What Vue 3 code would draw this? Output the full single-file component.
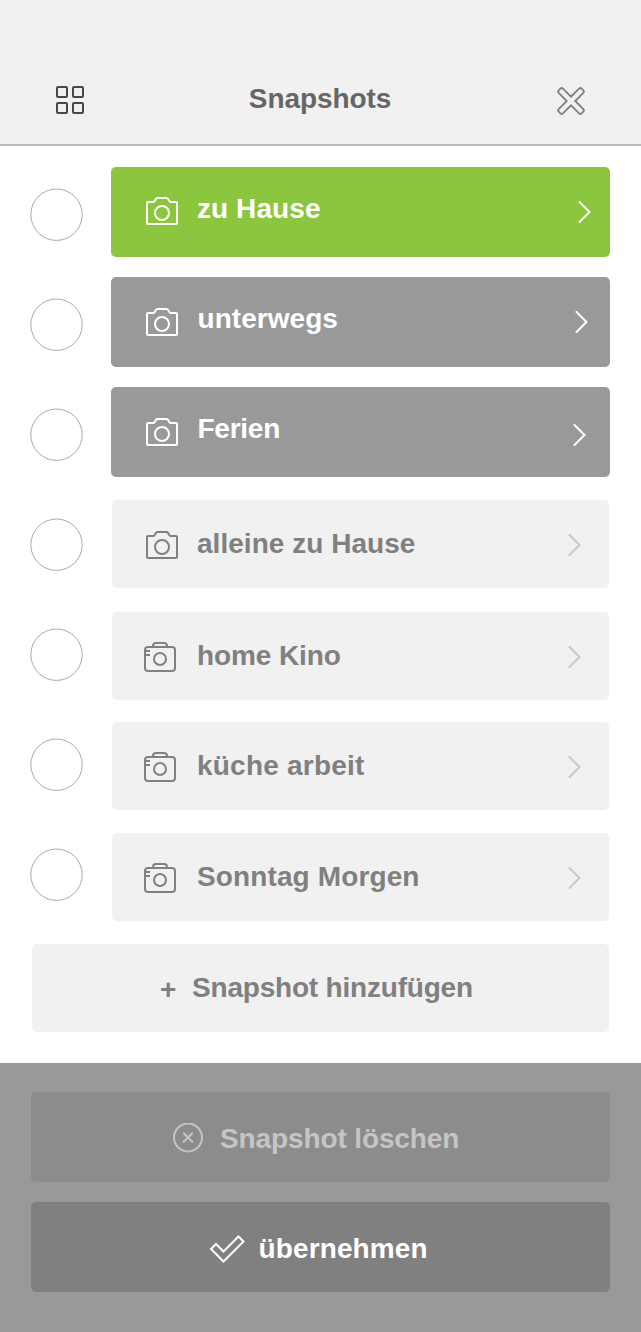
<script setup>
const snapshots = [
  { name: 'zu Hause', kind: 'active', icon: 'camera', tracking: 0.08 },
  { name: 'unterwegs', kind: 'saved', icon: 'camera', tracking: 0.05 },
  { name: 'Ferien', kind: 'saved', icon: 'camera', tracking: -0.25 },
  { name: 'alleine zu Hause', kind: 'idle', icon: 'camera', tracking: 0.03 },
  { name: 'home Kino', kind: 'idle', icon: 'compact', tracking: -0.1 },
  { name: 'küche arbeit', kind: 'idle', icon: 'compact', tracking: 0.22 },
  { name: 'Sonntag Morgen', kind: 'idle', icon: 'compact', tracking: 0.12 },
]
</script>

<template>
  <div class="screen">
    <header class="header">
      <svg class="grid-icon" width="28" height="28" viewBox="0 0 28 28">
        <rect x="1" y="1" width="10" height="10" rx="1" />
        <rect x="17" y="1" width="10" height="10" rx="1" />
        <rect x="1" y="17" width="10" height="10" rx="1" />
        <rect x="17" y="17" width="10" height="10" rx="1" />
      </svg>
      <h1 class="title">Snapshots</h1>
      <svg class="close-icon" width="30" height="30" viewBox="-15 -15 30 30">
        <path
          transform="rotate(45)"
          d="M-3-3V-14.400Q-3-16.200-1.200-16.200H1.200Q3-16.200 3-14.400V-3H14.400Q16.200-3 16.200-1.200V1.200Q16.200 3 14.400 3H3V14.400Q3 16.200 1.200 16.200H-1.200Q-3 16.200-3 14.400V3H-14.400Q-16.200 3-16.200 1.200V-1.200Q-16.200-3-14.400-3Z"
        />
      </svg>
    </header>

    <main class="main">
      <div class="list">
        <div class="radios">
          <svg v-for="s in snapshots" :key="s.name" class="radio" width="54" height="54" viewBox="0 0 54 54">
            <circle cx="26.5" cy="26.7" r="25.7" />
          </svg>
        </div>
        <div class="cards">
          <div v-for="s in snapshots" :key="s.name" class="card" :class="[s.kind, s.icon]">
            <svg v-if="s.icon === 'camera'" class="icon" width="32" height="28" viewBox="0 0 32 28">
              <path d="M2 5H7Q8 5 8.5 4.2L10 1.9Q10.500 1 11.500 1H20.500Q21.500 1 22 1.900L23.500 4.200Q24 5 25 5H30Q31 5 31 6V26Q31 27 30 27H2Q1 27 1 26V6Q1 5 2 5Z" />
              <circle cx="16" cy="16" r="7" />
            </svg>
            <svg v-else class="icon" width="32" height="30" viewBox="0 0 32 30">
              <rect x="1" y="5" width="30" height="24" rx="3" />
              <path d="M9 5V4Q9 1 12 1H20Q23 1 23 4V5M1 9H6M1 13H6" />
              <circle cx="16" cy="17" r="6" />
            </svg>
            <span class="label" :style="{ letterSpacing: s.tracking + 'px' }">{{ s.name }}</span>
            <svg class="chevron" width="14" height="22" viewBox="0 0 14 22">
              <path d="M1.500 1L11.500 11L1.500 21" />
            </svg>
          </div>
        </div>
      </div>
      <button class="add"><span class="plus">+</span><span>Snapshot hinzufügen</span></button>
    </main>

    <footer class="footer">
      <button class="action delete">
        <svg width="30" height="30" viewBox="0 0 30 30">
          <circle cx="15" cy="14.500" r="14" />
          <path d="M10.200 9.700L19.800 19.300M19.800 9.700L10.200 19.300" />
        </svg>
        <span>Snapshot löschen</span>
      </button>
      <button class="action apply">
        <svg width="36" height="28" viewBox="0 0 36 28">
          <path d="M2 14L7 9L14.500 16.500L29.500 1.500L34.500 6.500L14.500 26.500Z" />
        </svg>
        <span>übernehmen</span>
      </button>
    </footer>
  </div>
</template>

<style>
body {
  background: #fff;
}
</style>

<style scoped>
.screen {
  display: flex;
  flex-direction: column;
  width: 641px;
  height: 1332px;
  overflow: hidden;
  background: #fff;
  color: #808080;
  font: bold 28px/32px "Liberation Sans", Arial, sans-serif;
}

.screen * {
  box-sizing: border-box;
}

svg {
  display: block;
  flex: none;
  fill: none;
  stroke: currentColor;
  stroke-width: 2;
}

button {
  border: 0;
  font: inherit;
  white-space: pre;
}

.header {
  display: flex;
  justify-content: space-between;
  align-items: flex-start;
  height: 146px;
  padding: 83px 55px 0 56px;
  border-bottom: 2px solid #b9b9b9;
  background: #f1f1f1;
}

.grid-icon {
  margin-top: 3px;
  color: #484848;
}

.title {
  margin: 0;
  color: #666;
  font: inherit;
  letter-spacing: -0.080px;
}

.close-icon {
  margin-top: 3px;
  color: #808080;
  stroke-width: 1.8;
}

.main {
  height: 917px;
}

.list {
  display: flex;
  gap: 27px;
  padding: 21px 31px 0 30px;
}

.radios {
  display: flex;
  flex-direction: column;
  gap: 56px;
  padding-top: 21px;
}

.radio {
  color: #a9a9a9;
  stroke-width: 1;
}

.cards {
  display: flex;
  flex: 1;
  flex-direction: column;
}

.card {
  display: flex;
  align-items: flex-start;
  height: 90px;
  margin-bottom: 20px;
  padding: 26px 18px 0 35px;
  border-radius: 5px;
}

.active {
  background: #8cc63f;
  color: #fff;
}

.saved {
  background: #999;
  color: #fff;
}

.saved .chevron {
  margin-right: 3px;
}

.icon {
  margin-top: 4px;
}

.saved .icon {
  margin-top: 5px;
}

.label {
  margin-left: 19px;
  white-space: pre;
}

.saved .label {
  margin-left: 19.500px;
}

.chevron {
  margin-top: 8px;
  margin-left: auto;
  stroke-linecap: round;
}

.card:nth-child(3) .chevron {
  margin-top: 11px;
  margin-right: 5px;
}

.idle {
  height: 88px;
  margin: 3px 1px 21px;
  padding: 28px 27.500px 0 34px;
  background: #f1f1f1;
}

.idle .icon {
  margin-top: 3px;
}

.idle .chevron {
  margin-top: 6px;
  color: #c8c8c8;
}

.compact {
  margin-top: 0;
  margin-bottom: 22px;
  padding-left: 32px;
}

.compact .icon {
  margin-top: 2px;
}

.compact .label {
  margin-left: 21px;
}

.card:nth-child(5) {
  margin-top: 3px;
}

.card:nth-child(6) {
  margin-bottom: 23px;
}

.card:nth-child(7) {
  margin-bottom: 23px;
}

.add {
  display: flex;
  width: 577px;
  height: 88px;
  margin-left: 32px;
  padding: 28px 0 0 128px;
  border-radius: 5px;
  background: #f1f1f1;
  color: #808080;
  letter-spacing: -0.200px;
}

.plus {
  width: 32px;
  margin-top: 2px;
  text-align: left;
}

.footer {
  display: flex;
  flex-direction: column;
  flex: 1;
  gap: 20px;
  padding: 29px 31px 0;
  background: #999;
}

.action {
  display: flex;
  align-items: flex-start;
  height: 90px;
  padding: 31px 0 0;
  border-radius: 5px;
}

.delete {
  padding-left: 142px;
  background: #8c8c8c;
  color: #c5c5c5;
  letter-spacing: -0.120px;
}

.delete svg {
  margin: 0 17px 0 0;
}

.apply {
  padding-left: 178px;
  background: #808080;
  color: #fff;
  letter-spacing: 0.120px;
}

.apply svg {
  margin: 2px 13.500px 0 0;
}
</style>
